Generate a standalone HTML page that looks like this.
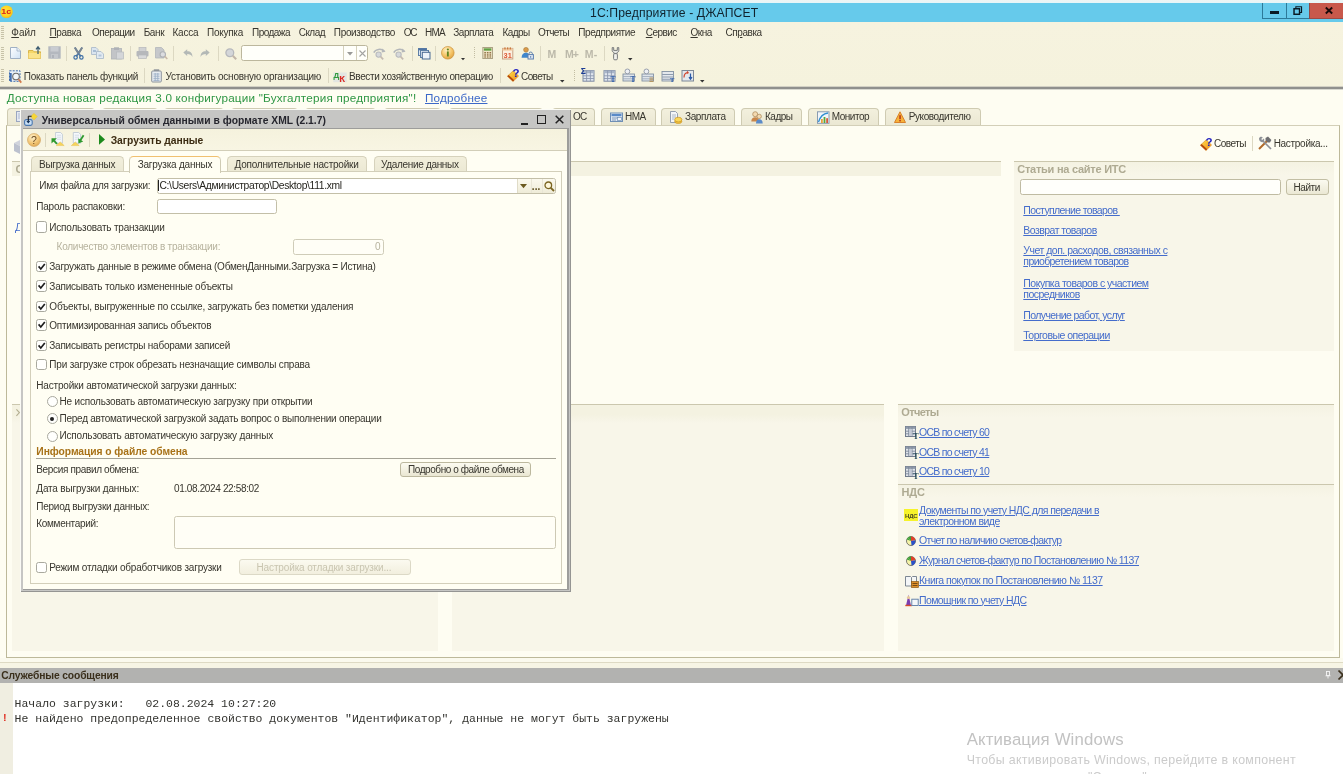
<!DOCTYPE html>
<html lang="ru"><head><meta charset="utf-8"><title>1С:Предприятие - ДЖАПСЕТ</title>
<style>
html,body{margin:0;padding:0;}
body{width:1343px;height:774px;overflow:hidden;position:relative;background:#f5f2dd;font-family:"Liberation Sans",sans-serif;}
#root{position:absolute;left:0;top:0;width:1343px;height:774px;overflow:hidden;will-change:transform;}
svg{position:absolute;overflow:visible;}
</style></head><body><div id="root">
<div style="position:absolute;left:0px;top:0px;width:1343px;height:3px;background:linear-gradient(#eff4f3,#e6f6f9)"></div><div style="position:absolute;left:0px;top:3px;width:1343px;height:19px;background:#66caeb"></div><svg style="left:0px;top:5px" width="13" height="14" viewBox="0 0 13 14"><defs><radialGradient id="g1c" cx="0.45" cy="0.4" r="0.6"><stop offset="0" stop-color="#ffe23a"/><stop offset="0.75" stop-color="#ffd21e"/><stop offset="1" stop-color="#f0b81a"/></radialGradient></defs><circle cx="6.5" cy="6.8" r="6.3" fill="url(#g1c)"/><text x="1.2" y="9.3" font-family="Liberation Sans, sans-serif" font-weight="bold" font-size="7.5" fill="#d8261c" textLength="10" lengthAdjust="spacingAndGlyphs">1с</text></svg><span style='position:absolute;white-space:pre;left:590.00px;top:4.97px;font:12.20px/16px "Liberation Sans", sans-serif;color:#10232e;letter-spacing:0.115px;'>1С:Предприятие - ДЖАПСЕТ</span><div style="position:absolute;left:1262px;top:3px;width:24px;height:16px;box-sizing:border-box;border-left:1px solid #2c7a99;border-bottom:1px solid #2c7a99;"></div><div style="position:absolute;left:1286px;top:3px;width:23px;height:16px;box-sizing:border-box;border-left:1px solid #2c7a99;border-bottom:1px solid #2c7a99;"></div><div style="position:absolute;left:1309px;top:3px;width:34px;height:16px;background:#c8584b;box-sizing:border-box;border-left:1px solid #8d4a48;border-bottom:1px solid #9d4a44;"></div><div style="position:absolute;left:1270px;top:11px;width:9px;height:2.5px;background:#0a1a24"></div><svg style="left:1293px;top:5.8px" width="9.4" height="9.2" viewBox="0 0 10 10"><path d="M3 2.5V0.8H9.2V7H7.5" fill="none" stroke="#0a1a24" stroke-width="1.2"/><rect x="1" y="3" width="6" height="6" fill="none" stroke="#0a1a24" stroke-width="1.6"/></svg><svg style="left:1325px;top:7px" width="8" height="7" viewBox="0 0 8 7"><path d="M0.8 0.5L7.2 6.5M7.2 0.5L0.8 6.5" stroke="#1a0a0a" stroke-width="1.9"/></svg><div style="position:absolute;left:0px;top:22px;width:1343px;height:65px;background:linear-gradient(#f6f3df,#f5f2dd)"></div><div style="position:absolute;left:0px;top:86px;width:1343px;height:1px;background:#d2d0c4"></div><div style="position:absolute;left:0px;top:86.8px;width:1343px;height:2px;background:#8f8f8d"></div><div style="position:absolute;left:0px;top:88.8px;width:1343px;height:0.7px;background:#d8d8d0"></div><div style="position:absolute;left:1px;top:26px;width:3px;height:13px;background:repeating-linear-gradient(#c7c2a8 0 1px,#f5f2dd 1px 2px)"></div><div style="position:absolute;left:1px;top:47px;width:3px;height:13px;background:repeating-linear-gradient(#c7c2a8 0 1px,#f5f2dd 1px 2px)"></div><div style="position:absolute;left:1px;top:69px;width:3px;height:13px;background:repeating-linear-gradient(#c7c2a8 0 1px,#f5f2dd 1px 2px)"></div><span style='position:absolute;white-space:pre;left:11.30px;top:26.04px;font:10.00px/13px "Liberation Sans", sans-serif;color:#38362e;letter-spacing:-0.023px;'><u>Ф</u>айл</span><span style='position:absolute;white-space:pre;left:49.50px;top:26.04px;font:10.00px/13px "Liberation Sans", sans-serif;color:#38362e;letter-spacing:-0.347px;'><u>П</u>равка</span><span style='position:absolute;white-space:pre;left:92.00px;top:26.04px;font:10.00px/13px "Liberation Sans", sans-serif;color:#38362e;letter-spacing:-0.510px;'>Операции</span><span style='position:absolute;white-space:pre;left:143.70px;top:26.04px;font:10.00px/13px "Liberation Sans", sans-serif;color:#38362e;letter-spacing:-0.383px;'>Банк</span><span style='position:absolute;white-space:pre;left:172.50px;top:26.04px;font:10.00px/13px "Liberation Sans", sans-serif;color:#38362e;letter-spacing:-0.231px;'>Касса</span><span style='position:absolute;white-space:pre;left:207.00px;top:26.04px;font:10.00px/13px "Liberation Sans", sans-serif;color:#38362e;letter-spacing:-0.259px;'>Покупка</span><span style='position:absolute;white-space:pre;left:252.00px;top:26.04px;font:10.00px/13px "Liberation Sans", sans-serif;color:#38362e;letter-spacing:-0.536px;'>Продажа</span><span style='position:absolute;white-space:pre;left:298.70px;top:26.04px;font:10.00px/13px "Liberation Sans", sans-serif;color:#38362e;letter-spacing:-0.531px;'>Склад</span><span style='position:absolute;white-space:pre;left:333.80px;top:26.04px;font:10.00px/13px "Liberation Sans", sans-serif;color:#38362e;letter-spacing:-0.334px;'>Производство</span><span style='position:absolute;white-space:pre;left:403.70px;top:26.04px;font:10.00px/13px "Liberation Sans", sans-serif;color:#38362e;letter-spacing:-1.200px;'>ОС</span><span style='position:absolute;white-space:pre;left:425.00px;top:26.04px;font:10.00px/13px "Liberation Sans", sans-serif;color:#38362e;letter-spacing:-0.745px;'>НМА</span><span style='position:absolute;white-space:pre;left:453.30px;top:26.04px;font:10.00px/13px "Liberation Sans", sans-serif;color:#38362e;letter-spacing:-0.475px;'>Зарплата</span><span style='position:absolute;white-space:pre;left:502.50px;top:26.04px;font:10.00px/13px "Liberation Sans", sans-serif;color:#38362e;letter-spacing:-0.557px;'>Кадры</span><span style='position:absolute;white-space:pre;left:538.00px;top:26.04px;font:10.00px/13px "Liberation Sans", sans-serif;color:#38362e;letter-spacing:-0.596px;'>Отчеты</span><span style='position:absolute;white-space:pre;left:578.30px;top:26.04px;font:10.00px/13px "Liberation Sans", sans-serif;color:#38362e;letter-spacing:-0.449px;'>Предприятие</span><span style='position:absolute;white-space:pre;left:645.80px;top:26.04px;font:10.00px/13px "Liberation Sans", sans-serif;color:#38362e;letter-spacing:-0.561px;'><u>С</u>ервис</span><span style='position:absolute;white-space:pre;left:690.50px;top:26.04px;font:10.00px/13px "Liberation Sans", sans-serif;color:#38362e;letter-spacing:-0.512px;'><u>О</u>кна</span><span style='position:absolute;white-space:pre;left:725.50px;top:26.04px;font:10.00px/13px "Liberation Sans", sans-serif;color:#38362e;letter-spacing:-0.433px;'>Сп<u>р</u>авка</span><svg style="left:9.5px;top:47px" width="11" height="12" viewBox="0 0 11 12"><defs><linearGradient id="gdoc" x1="0" y1="0" x2="1" y2="1"><stop offset="0" stop-color="#ffffff"/><stop offset="1" stop-color="#cfe2f4"/></linearGradient></defs><path d="M0.5 0.5H7L10.5 4V11.5H0.5Z" fill="url(#gdoc)" stroke="#9fb0c4" stroke-width="1"/><path d="M7 0.5V4H10.5" fill="#e8f0f8" stroke="#9fb0c4" stroke-width="0.8"/></svg><svg style="left:28px;top:46px" width="13" height="13" viewBox="0 0 13 13"><path d="M0.5 4.5H5L6 5.8H12.5V12.5H0.5Z" fill="#f6d768" stroke="#d9b44a" stroke-width="1"/><path d="M0.5 7H12.5V12.5H0.5Z" fill="#fbe38a"/><path d="M10 8V1.5M8 3.3L10 0.8L12 3.3" fill="none" stroke="#3a5a70" stroke-width="1.2"/></svg><svg style="left:47.5px;top:46px" width="13" height="13" viewBox="0 0 13 13"><rect x="0.3" y="0.3" width="12.4" height="12.4" fill="#b4b8bf"/><rect x="2.5" y="1" width="8" height="4.5" fill="#c9ccd1"/><rect x="3" y="8" width="7" height="4.7" fill="#c4c7cc"/><rect x="4" y="9" width="2" height="3" fill="#aeb2b9"/></svg><div style="position:absolute;left:66px;top:46px;width:1px;height:15px;background:#dcd8c2"></div><svg style="left:72.5px;top:46.5px" width="11" height="13" viewBox="0 0 11 13"><path d="M1.8 0.5L7.6 9.2M9.2 0.5L3.4 9.2" stroke="#5b7ea3" stroke-width="1.9" fill="none"/><path d="M1.8 0.5L5 6M9.2 0.5L6 6" stroke="#7d8791" stroke-width="1.6" fill="none"/><circle cx="2.6" cy="10.4" r="1.7" fill="none" stroke="#3c6ea5" stroke-width="1.2"/><circle cx="8.4" cy="10.4" r="1.7" fill="none" stroke="#3c6ea5" stroke-width="1.2"/></svg><svg style="left:91px;top:47px" width="13" height="12" viewBox="0 0 13 12"><path d="M0.5 0.5H5L7 2.5V7.5H0.5Z" fill="#dbe5ef" stroke="#aebccb" stroke-width="0.9"/><path d="M5.5 4.5H10L12.5 7V11.5H5.5Z" fill="#e2eaf2" stroke="#aebccb" stroke-width="0.9"/><rect x="2" y="3" width="3" height="2" fill="#a8bdd4"/><rect x="7.5" y="7.5" width="3" height="2" fill="#b4c6da"/></svg><svg style="left:111px;top:46.5px" width="13" height="12.5" viewBox="0 0 13 12.5"><rect x="0.5" y="1.5" width="10" height="10.5" fill="#c2c4c7" stroke="#b0b3b7" stroke-width="0.8"/><rect x="3" y="0.3" width="5" height="2.6" fill="#aeb1b6"/><rect x="5.5" y="5" width="7" height="7" fill="#d4d6d9" stroke="#b6b9bd" stroke-width="0.7"/></svg><div style="position:absolute;left:130px;top:46px;width:1px;height:15px;background:#dcd8c2"></div><svg style="left:136px;top:47px" width="13" height="12" viewBox="0 0 13 12"><rect x="3" y="0.5" width="7" height="4" fill="#d0d1d3" stroke="#b5b7ba" stroke-width="0.7"/><rect x="0.5" y="4" width="12" height="5.5" rx="1" fill="#b6b8bb"/><rect x="2.5" y="8" width="8" height="3.5" fill="#d8d9da" stroke="#b5b7ba" stroke-width="0.7"/></svg><svg style="left:155px;top:47px" width="13" height="12.5" viewBox="0 0 13 12.5"><path d="M0.5 0.5H6.5L9 3V11H0.5Z" fill="#c6c8cb" stroke="#b3b6ba" stroke-width="0.8"/><circle cx="7.8" cy="7.4" r="2.7" fill="#dcdde0" stroke="#aeb1b6" stroke-width="1.1"/><path d="M9.8 9.4L12.3 12" stroke="#c9b9a8" stroke-width="1.6"/></svg><div style="position:absolute;left:173px;top:46px;width:1px;height:15px;background:#dcd8c2"></div><svg style="left:182.5px;top:49px" width="10" height="8.5" viewBox="0 0 10 8.5"><path d="M0.3 3.6L4.2 0.3V2.3C7.6 2.3 9.6 4.3 9.4 8C8.3 5.8 6.8 5 4.2 5V7Z" fill="#b3b8b6"/></svg><svg style="left:200px;top:49px" width="10" height="8.5" viewBox="0 0 10 8.5"><path d="M9.7 3.6L5.8 0.3V2.3C2.4 2.3 0.4 4.3 0.6 8C1.7 5.8 3.2 5 5.8 5V7Z" fill="#b3b8b6"/></svg><div style="position:absolute;left:217.5px;top:46px;width:1px;height:15px;background:#dcd8c2"></div><svg style="left:225px;top:48px" width="12" height="12" viewBox="0 0 12 12"><circle cx="4.8" cy="4.8" r="3.9" fill="#d4d6d9" stroke="#b6b8bc" stroke-width="1.3"/><path d="M7.8 7.8L11.2 11.2" stroke="#c2b6a8" stroke-width="2"/></svg><div style="position:absolute;left:240.5px;top:45px;width:127.5px;height:15.5px;box-sizing:border-box;background:#fffffa;border:1px solid #bcb79d;border-radius:2.5px;"></div><div style="position:absolute;left:343px;top:46px;width:1px;height:13.5px;background:#d5d1bc"></div><div style="position:absolute;left:356px;top:46px;width:1px;height:13.5px;background:#d5d1bc"></div><svg style="left:346.5px;top:51.5px" width="6" height="4" viewBox="0 0 6 4"><path d="M0 0H6L3 3.4Z" fill="#9a9a98"/></svg><svg style="left:359px;top:49.5px" width="7" height="7" viewBox="0 0 7 7"><path d="M0.5 0.5L6.5 6.5M6.5 0.5L0.5 6.5" stroke="#a3a3a1" stroke-width="1.1"/></svg><svg style="left:373px;top:47.5px" width="13.5" height="12" viewBox="0 0 13.5 12"><path d="M0.8 4.6C2.5 0.8 8.5 0.4 11.3 3.2" fill="none" stroke="#b4b7ba" stroke-width="1.5"/><path d="M9.4 0.6L12.6 3.8L8.6 4.6Z" fill="#b4b7ba"/><circle cx="5.6" cy="6.6" r="2.6" fill="#d6d8da" stroke="#b9bbbe" stroke-width="1.1"/><path d="M7.6 8.6L10.2 11.4" stroke="#c5bbb0" stroke-width="1.7"/></svg><svg style="left:393px;top:47.5px" width="13.5" height="12" viewBox="0 0 13.5 12"><path d="M0.8 4.6C2.5 0.8 8.5 0.4 11.3 3.2" fill="none" stroke="#b4b7ba" stroke-width="1.5"/><path d="M9.4 0.6L12.6 3.8L8.6 4.6Z" fill="#b4b7ba"/><circle cx="5.6" cy="6.6" r="2.6" fill="#d6d8da" stroke="#b9bbbe" stroke-width="1.1"/><path d="M7.6 8.6L10.2 11.4" stroke="#c5bbb0" stroke-width="1.7"/></svg><div style="position:absolute;left:411.5px;top:46px;width:1px;height:15px;background:#dcd8c2"></div><svg style="left:418px;top:47.5px" width="12.5" height="11.5" viewBox="0 0 12.5 11.5"><rect x="0.5" y="0.5" width="8" height="7" fill="#dbe6f2" stroke="#5f7fa5" stroke-width="1"/><rect x="0.5" y="0.5" width="8" height="1.8" fill="#4f74a3"/><rect x="2.5" y="2.5" width="8" height="7" fill="#e4ecf5" stroke="#5f7fa5" stroke-width="1"/><rect x="4.3" y="4.3" width="7.7" height="6.7" fill="#eef3f9" stroke="#4a6a93" stroke-width="1"/></svg><div style="position:absolute;left:435px;top:46px;width:1px;height:15px;background:#dcd8c2"></div><svg style="left:441px;top:46.4px" width="13.6" height="13.6" viewBox="0 0 14 14"><defs><radialGradient id="ginf" cx="0.4" cy="0.3" r="0.8"><stop offset="0" stop-color="#fff0c4"/><stop offset="0.55" stop-color="#f5c467"/><stop offset="1" stop-color="#d99a38"/></radialGradient></defs><circle cx="7" cy="7" r="6.5" fill="url(#ginf)" stroke="#c98f3a" stroke-width="0.7"/><rect x="6.1" y="5.6" width="1.9" height="5.2" fill="#5f8420"/><circle cx="7.05" cy="3.6" r="1.1" fill="#5f8420"/></svg><svg style="left:460.5px;top:58px" width="4" height="2.5" viewBox="0 0 4 2.5"><path d="M0 0H4L2 2.3Z" fill="#333"/></svg><div style="position:absolute;left:474.3px;top:47px;width:1.2px;height:11px;background:repeating-linear-gradient(#c2bda3 0 1px,#f5f2dd 1px 2px)"></div><svg style="left:482.3px;top:46.8px" width="11.3" height="12" viewBox="0 0 11 12.5"><rect x="0.5" y="0.5" width="10" height="11.5" fill="#efe5c8" stroke="#a99f80" stroke-width="1"/><rect x="1.6" y="1.4" width="7.8" height="2.4" fill="#5fa043"/><g fill="#8a6a3c"><rect x="2" y="5.3" width="1.7" height="1.4"/><rect x="4.7" y="5.3" width="1.7" height="1.4"/><rect x="7.4" y="5.3" width="1.7" height="1.4"/><rect x="2" y="7.6" width="1.7" height="1.4"/><rect x="4.7" y="7.6" width="1.7" height="1.4"/><rect x="7.4" y="7.6" width="1.7" height="1.4"/><rect x="2" y="9.8" width="1.7" height="1.2"/><rect x="4.7" y="9.8" width="1.7" height="1.2"/><rect x="7.4" y="9.8" width="1.7" height="1.2"/></g></svg><svg style="left:502px;top:46.5px" width="11.5" height="13" viewBox="0 0 11.5 13"><rect x="0.5" y="1.4" width="10.3" height="10.6" fill="#fbefe0" stroke="#c9a284" stroke-width="1"/><rect x="0.5" y="1.4" width="10.3" height="2.2" fill="#f1c9a0"/><rect x="2.3" y="0.4" width="1.3" height="2" fill="#c9783c"/><rect x="5" y="0.4" width="1.3" height="2" fill="#c9783c"/><rect x="7.7" y="0.4" width="1.3" height="2" fill="#c9783c"/><text x="1.6" y="11.2" font-family="Liberation Sans, sans-serif" font-weight="bold" font-size="7.4" fill="#de5a36" textLength="8.2" lengthAdjust="spacingAndGlyphs">31</text></svg><svg style="left:521.3px;top:46.6px" width="13" height="12.5" viewBox="0 0 13 12.5"><circle cx="5" cy="2.8" r="2.4" fill="#d99a4a" stroke="#a8783a" stroke-width="0.6"/><path d="M0.6 10.8C0.6 7.4 2.4 5.8 5 5.8C6.6 5.8 7.4 6.4 8 7.4V10.8Z" fill="#3f86cc"/><rect x="7" y="7.6" width="5.4" height="4.4" fill="#e4ebf4" stroke="#5e7fae" stroke-width="1"/><path d="M8.1 7.6V6.2C8.1 4.7 11.3 4.7 11.3 6.2V7.6" fill="none" stroke="#5e7fae" stroke-width="1"/><rect x="9.2" y="9" width="1" height="1.8" fill="#5e7fae"/></svg><div style="position:absolute;left:539.7px;top:46px;width:1px;height:15px;background:#dcd8c2"></div><span style='position:absolute;white-space:pre;left:547.50px;top:46.96px;font:bold 10.50px/14px "Liberation Sans", sans-serif;color:#bcb9aa;letter-spacing:-0.250px;'>M</span><span style='position:absolute;white-space:pre;left:565.00px;top:46.96px;font:bold 10.50px/14px "Liberation Sans", sans-serif;color:#bcb9aa;letter-spacing:-0.945px;'>M+</span><span style='position:absolute;white-space:pre;left:584.70px;top:46.96px;font:bold 10.50px/14px "Liberation Sans", sans-serif;color:#bcb9aa;letter-spacing:0.275px;'>M-</span><div style="position:absolute;left:603.5px;top:46px;width:1px;height:15px;background:#dcd8c2"></div><svg style="left:611px;top:46.5px" width="9" height="13.5" viewBox="0 0 9 13.5"><path d="M1.2 0.6V3.6C1.2 4.8 2.4 5.4 3 5.6V6.8H6V5.6C6.6 5.4 7.8 4.8 7.8 3.6V0.6H6.3V3.4H2.7V0.6Z" fill="#e6e7e4" stroke="#6c6e70" stroke-width="0.9"/><rect x="2.6" y="6.6" width="3.8" height="6.2" rx="1.2" fill="#f1f1ec" stroke="#6c6e70" stroke-width="0.9"/></svg><svg style="left:628px;top:58px" width="4.5" height="2.5" viewBox="0 0 4.5 2.5"><path d="M0 0H4.5L2.25 2.4Z" fill="#333"/></svg><svg style="left:9px;top:69.5px" width="13" height="13.5" viewBox="0 0 13 13.5"><rect x="0.5" y="0.8" width="10.5" height="10.5" fill="#e9f0f8" stroke="#3f6cb0" stroke-width="1" stroke-dasharray="2 1.2"/><rect x="0.5" y="3" width="2.2" height="8" fill="#3f6cb0"/><circle cx="7" cy="6.6" r="3.3" fill="#f4f7fa" stroke="#6d6d6d" stroke-width="1.1"/><path d="M9.4 9.2L12.3 12.6" stroke="#d67a4a" stroke-width="1.7"/></svg><span style='position:absolute;white-space:pre;left:23.80px;top:69.63px;font:10.00px/13px "Liberation Sans", sans-serif;color:#38362e;letter-spacing:-0.285px;'>Показать панель функций</span><div style="position:absolute;left:144px;top:68px;width:1px;height:15px;background:#dcd8c2"></div><svg style="left:151px;top:68.5px" width="11" height="13.5" viewBox="0 0 11 13.5"><rect x="2.8" y="0.3" width="5.4" height="2.4" fill="#8f959c"/><rect x="0.7" y="2" width="9.6" height="11" rx="1" fill="#e6ebf0" stroke="#8c939b" stroke-width="1"/><g stroke="#9db0c6" stroke-width="0.9"><path d="M2.5 5H8.5M2.5 7.2H8.5M2.5 9.4H8.5M2.5 11.4H8.5M4.2 4V12M6.8 4V12"/></g></svg><span style='position:absolute;white-space:pre;left:165.50px;top:69.63px;font:10.00px/13px "Liberation Sans", sans-serif;color:#38362e;letter-spacing:-0.248px;'>Установить основную организацию</span><div style="position:absolute;left:327.5px;top:68px;width:1px;height:15px;background:#dcd8c2"></div><svg style="left:333px;top:69px" width="14" height="13.5" viewBox="0 0 14 13.5"><rect x="0.3" y="3.5" width="13.4" height="9.7" fill="#e3e6e2"/><text x="0.6" y="8.6" font-family="Liberation Sans, sans-serif" font-weight="bold" font-size="8" fill="#2f9a3a">Д</text><text x="6.3" y="12.8" font-family="Liberation Sans, sans-serif" font-weight="bold" font-size="9.5" fill="#dc2a22">К</text></svg><span style='position:absolute;white-space:pre;left:349.00px;top:69.63px;font:10.00px/13px "Liberation Sans", sans-serif;color:#38362e;letter-spacing:-0.360px;'>Ввести хозяйственную операцию</span><div style="position:absolute;left:500px;top:68px;width:1px;height:15px;background:#dcd8c2"></div><svg style="left:506.5px;top:68px" width="12.5" height="14" viewBox="0 0 12.5 14"><defs><linearGradient id="gsv" x1="0" y1="0" x2="1" y2="1"><stop offset="0" stop-color="#ffe14a"/><stop offset="1" stop-color="#f08a1c"/></linearGradient></defs><path d="M0.4 8.2L6.2 2.8L11.6 8L6 13.4Z" fill="url(#gsv)" stroke="#d98a1c" stroke-width="0.6"/><path d="M0.4 8.2L6 13.4L7.2 12.3L1.6 7Z" fill="#b3470c"/><text x="5.6" y="8.6" font-family="Liberation Sans, sans-serif" font-weight="bold" font-size="11.5" fill="#1f1fc0">?</text></svg><span style='position:absolute;white-space:pre;left:521.00px;top:69.63px;font:10.00px/13px "Liberation Sans", sans-serif;color:#38362e;letter-spacing:-0.581px;'>Советы</span><svg style="left:560px;top:80px" width="4.5" height="2.5" viewBox="0 0 4.5 2.5"><path d="M0 0H4.5L2.25 2.4Z" fill="#333"/></svg><div style="position:absolute;left:574.2px;top:69.5px;width:1.2px;height:11px;background:repeating-linear-gradient(#c2bda3 0 1px,#f5f2dd 1px 2px)"></div><svg style="left:580.5px;top:68px" width="14" height="15" viewBox="0 0 14 15"><rect x="2" y="2.6" width="11" height="10.6" fill="#dfe5ee" stroke="#7f8ba3" stroke-width="1"/><rect x="2" y="2.6" width="11" height="2.6" fill="#a9b5c8"/><path d="M5.6 2.6V13.2M9.4 2.6V13.2M2 7.8H13M2 10.5H13" stroke="#8d99b0" stroke-width="0.9"/><text x="-0.3" y="6.3" font-family="Liberation Sans, sans-serif" font-weight="bold" font-size="8.5" fill="#1c3c94">Σ</text></svg><svg style="left:601.5px;top:68px" width="14" height="15" viewBox="0 0 14 15"><rect x="2" y="2.6" width="11" height="10.6" fill="#dfe5ee" stroke="#7f8ba3" stroke-width="1"/><rect x="2" y="2.6" width="11" height="2.6" fill="#a9b5c8"/><path d="M5.6 2.6V13.2M9.4 2.6V13.2M2 7.8H13M2 10.5H13" stroke="#8d99b0" stroke-width="0.9"/><text x="8.6" y="14" font-family="Liberation Serif, serif" font-weight="bold" font-size="7.5" fill="#2a5aa8">T</text></svg><svg style="left:621.5px;top:68px" width="14" height="15" viewBox="0 0 14 15"><rect x="1" y="6" width="11.5" height="7" fill="#dfe4ea" stroke="#8391a3" stroke-width="0.9"/><path d="M1 8.5H12.5M1 10.8H12.5" stroke="#9aa7b8" stroke-width="0.8"/><circle cx="5.4" cy="3.4" r="2.4" fill="#eef0f4" stroke="#8f96a6" stroke-width="0.9"/><text x="8.6" y="14" font-family="Liberation Serif, serif" font-weight="bold" font-size="7.5" fill="#2a5aa8">T</text></svg><svg style="left:641px;top:68px" width="14" height="15" viewBox="0 0 14 15"><rect x="1" y="6" width="11.5" height="7" fill="#dfe4ea" stroke="#8391a3" stroke-width="0.9"/><path d="M1 8.5H12.5M1 10.8H12.5" stroke="#9aa7b8" stroke-width="0.8"/><circle cx="5.4" cy="3.4" r="2.4" fill="#eef0f4" stroke="#8f96a6" stroke-width="0.9"/><path d="M8.5 10H12.5M8.5 11.8H12.5M8.5 13.4H12.5" stroke="#b08a4a" stroke-width="0.9"/></svg><svg style="left:661px;top:68px" width="14" height="15" viewBox="0 0 14 15"><rect x="1" y="3.5" width="11.5" height="9.5" fill="#e4e8ed" stroke="#8391a3" stroke-width="0.9"/><path d="M1 6.5H12.5M1 9H12.5M1 11.2H12.5" stroke="#8f9cae" stroke-width="1.1"/><text x="9" y="14.2" font-family="Liberation Serif, serif" font-weight="bold" font-size="6.5" fill="#2a5aa8">T</text></svg><svg style="left:681px;top:68px" width="14" height="15" viewBox="0 0 14 15"><rect x="1" y="2.5" width="11.5" height="10.5" fill="#e4e8ed" stroke="#7d8898" stroke-width="1"/><path d="M3 9.5C3 6 5 4.6 7 4.6L6.2 3.4M7 4.6L5.8 5.6" fill="none" stroke="#d0442c" stroke-width="1.2"/><path d="M9.5 5.5V11M8 9.2L9.5 11.2L11 9.2" fill="none" stroke="#2a5aa8" stroke-width="1.2"/></svg><svg style="left:699.5px;top:80px" width="4.5" height="2.5" viewBox="0 0 4.5 2.5"><path d="M0 0H4.5L2.25 2.4Z" fill="#333"/></svg><div style="position:absolute;left:0px;top:90px;width:1343px;height:578px;background:#fefdf2"></div><span style='position:absolute;white-space:pre;left:6.70px;top:90.35px;font:11.70px/15px "Liberation Sans", sans-serif;color:#2e9644;letter-spacing:0.217px;'>Доступна новая редакция 3.0 конфигурации "Бухгалтерия предприятия"!</span><span style='position:absolute;white-space:pre;left:425.00px;top:90.35px;font:11.70px/15px "Liberation Sans", sans-serif;color:#3c68c8;letter-spacing:0.208px;text-decoration:underline;'>Подробнее</span><div style="position:absolute;left:6px;top:125px;width:1333.5px;height:533px;box-sizing:border-box;background:#fefdf2;border:1px solid #bdb99a;border-top-color:#d3cfb8;"></div><div style="position:absolute;left:6.5px;top:107.5px;width:88.5px;height:17.5px;box-sizing:border-box;background:linear-gradient(#f3f0dd,#ebe8d3);border:1px solid #cfcbb2;border-bottom:none;border-radius:4px 4px 0 0;"></div><svg style="left:15.5px;top:111px" width="8" height="11" viewBox="0 0 8 11"><rect x="0.5" y="0.5" width="7" height="10" fill="#e3e8f2" stroke="#9aa6c0" stroke-width="1"/><path d="M2 3H6M2 5H6M2 7H6" stroke="#a9b4cc" stroke-width="0.9"/></svg><span style='position:absolute;white-space:pre;left:28.00px;top:110.03px;font:10.00px/13px "Liberation Sans", sans-serif;color:#38362e;letter-spacing:-0.892px;'>Начало работы</span><div style="position:absolute;left:102px;top:107.5px;width:56px;height:17.5px;box-sizing:border-box;background:linear-gradient(#f3f0dd,#ebe8d3);border:1px solid #cfcbb2;border-bottom:none;border-radius:4px 4px 0 0;"></div><span style='position:absolute;white-space:pre;left:124.00px;top:110.03px;font:10.00px/13px "Liberation Sans", sans-serif;color:#38362e;letter-spacing:0.492px;'>Банк</span><div style="position:absolute;left:164px;top:107.5px;width:60px;height:17.5px;box-sizing:border-box;background:linear-gradient(#f3f0dd,#ebe8d3);border:1px solid #cfcbb2;border-bottom:none;border-radius:4px 4px 0 0;"></div><span style='position:absolute;white-space:pre;left:186.00px;top:110.03px;font:10.00px/13px "Liberation Sans", sans-serif;color:#38362e;letter-spacing:0.209px;'>Касса</span><div style="position:absolute;left:231px;top:107.5px;width:67px;height:18px;box-sizing:border-box;background:#fefdf2;border:1px solid #cfcbb2;border-bottom:none;border-radius:4px 4px 0 0;"></div><span style='position:absolute;white-space:pre;left:252.00px;top:110.03px;font:10.00px/13px "Liberation Sans", sans-serif;color:#38362e;letter-spacing:0.027px;'>Покупка</span><div style="position:absolute;left:305px;top:107.5px;width:71px;height:17.5px;box-sizing:border-box;background:linear-gradient(#f3f0dd,#ebe8d3);border:1px solid #cfcbb2;border-bottom:none;border-radius:4px 4px 0 0;"></div><span style='position:absolute;white-space:pre;left:326.00px;top:110.03px;font:10.00px/13px "Liberation Sans", sans-serif;color:#38362e;letter-spacing:0.036px;'>Продажа</span><div style="position:absolute;left:384px;top:107.5px;width:57px;height:17.5px;box-sizing:border-box;background:linear-gradient(#f3f0dd,#ebe8d3);border:1px solid #cfcbb2;border-bottom:none;border-radius:4px 4px 0 0;"></div><span style='position:absolute;white-space:pre;left:404.00px;top:110.03px;font:10.00px/13px "Liberation Sans", sans-serif;color:#38362e;letter-spacing:-0.191px;'>Склад</span><div style="position:absolute;left:449px;top:107.5px;width:93.60000000000002px;height:17.5px;box-sizing:border-box;background:linear-gradient(#f3f0dd,#ebe8d3);border:1px solid #cfcbb2;border-bottom:none;border-radius:4px 4px 0 0;"></div><span style='position:absolute;white-space:pre;left:470.00px;top:110.03px;font:10.00px/13px "Liberation Sans", sans-serif;color:#38362e;letter-spacing:-0.100px;'>Производство</span><div style="position:absolute;left:551.5px;top:107.5px;width:43.5px;height:17.5px;box-sizing:border-box;background:linear-gradient(#f3f0dd,#ebe8d3);border:1px solid #cfcbb2;border-bottom:none;border-radius:4px 4px 0 0;"></div><span style='position:absolute;white-space:pre;left:573.00px;top:110.03px;font:10.00px/13px "Liberation Sans", sans-serif;color:#38362e;letter-spacing:-0.850px;'>ОС</span><div style="position:absolute;left:601px;top:107.5px;width:54.5px;height:17.5px;box-sizing:border-box;background:linear-gradient(#f3f0dd,#ebe8d3);border:1px solid #cfcbb2;border-bottom:none;border-radius:4px 4px 0 0;"></div><svg style="left:610px;top:111.5px" width="13" height="11" viewBox="0 0 13 11"><rect x="0.5" y="1" width="12" height="8.5" fill="#dfe8f2" stroke="#6f8fb5" stroke-width="1"/><rect x="1.5" y="2" width="10" height="2.2" fill="#5a8ac8"/><path d="M2 6H7M2 8H6" stroke="#7a93b3" stroke-width="0.9"/><rect x="7.5" y="5.5" width="4" height="3" fill="#f2f5f9" stroke="#6f8fb5" stroke-width="0.7"/></svg><span style='position:absolute;white-space:pre;left:625.00px;top:110.03px;font:10.00px/13px "Liberation Sans", sans-serif;color:#38362e;letter-spacing:-0.545px;'>НМА</span><div style="position:absolute;left:661.4px;top:107.5px;width:74.10000000000002px;height:17.5px;box-sizing:border-box;background:linear-gradient(#f3f0dd,#ebe8d3);border:1px solid #cfcbb2;border-bottom:none;border-radius:4px 4px 0 0;"></div><svg style="left:670px;top:110.5px" width="12.5" height="13" viewBox="0 0 12.5 13"><path d="M0.5 0.5H5.5L7.5 2.5V11.5H0.5Z" fill="#f3f5f8" stroke="#8a96a8" stroke-width="0.9"/><path d="M2 4H6M2 6H6M2 8H4.5" stroke="#9aa8ba" stroke-width="0.8"/><ellipse cx="8.3" cy="10.2" rx="3.6" ry="2.3" fill="#f4c43c" stroke="#c9952a" stroke-width="0.7"/><ellipse cx="8.3" cy="8.6" rx="3.6" ry="2.3" fill="#fbd85a" stroke="#c9952a" stroke-width="0.7"/></svg><span style='position:absolute;white-space:pre;left:685.00px;top:110.03px;font:10.00px/13px "Liberation Sans", sans-serif;color:#38362e;letter-spacing:-0.400px;'>Зарплата</span><div style="position:absolute;left:741.4px;top:107.5px;width:61.0px;height:17.5px;box-sizing:border-box;background:linear-gradient(#f3f0dd,#ebe8d3);border:1px solid #cfcbb2;border-bottom:none;border-radius:4px 4px 0 0;"></div><svg style="left:750.5px;top:110.5px" width="12" height="13" viewBox="0 0 12 13"><circle cx="4.2" cy="3.2" r="2.5" fill="#f3d9b0" stroke="#a88455" stroke-width="0.7"/><path d="M0.3 10.5C0.3 7.3 2 6.2 4.2 6.2C6.4 6.2 8 7.3 8 10.5Z" fill="#c9864a"/><circle cx="8.2" cy="5.4" r="2.2" fill="#f3d9b0" stroke="#a88455" stroke-width="0.7"/><path d="M5 12.5C5 9.6 6.4 8.3 8.3 8.3C10.2 8.3 11.7 9.6 11.7 12.5Z" fill="#5a8ac8"/></svg><span style='position:absolute;white-space:pre;left:765.00px;top:110.03px;font:10.00px/13px "Liberation Sans", sans-serif;color:#38362e;letter-spacing:-0.497px;'>Кадры</span><div style="position:absolute;left:808.3px;top:107.5px;width:71.0px;height:17.5px;box-sizing:border-box;background:linear-gradient(#f3f0dd,#ebe8d3);border:1px solid #cfcbb2;border-bottom:none;border-radius:4px 4px 0 0;"></div><svg style="left:817px;top:110.5px" width="12.5" height="13" viewBox="0 0 12.5 13"><rect x="0.5" y="0.8" width="11.5" height="11.5" fill="#f1f5fa" stroke="#7f93ac" stroke-width="0.9"/><path d="M1.5 11C3 6 6.5 2.6 11 2" fill="none" stroke="#2f8fd0" stroke-width="1.3"/><rect x="4" y="8" width="1.8" height="4" fill="#e9a23a"/><rect x="6.6" y="6" width="1.8" height="6" fill="#5aa83a"/><rect x="9.2" y="7.2" width="1.8" height="4.8" fill="#d85a3a"/></svg><span style='position:absolute;white-space:pre;left:831.80px;top:110.03px;font:10.00px/13px "Liberation Sans", sans-serif;color:#38362e;letter-spacing:-0.500px;'>Монитор</span><div style="position:absolute;left:884.7px;top:107.5px;width:96.29999999999995px;height:17.5px;box-sizing:border-box;background:linear-gradient(#f3f0dd,#ebe8d3);border:1px solid #cfcbb2;border-bottom:none;border-radius:4px 4px 0 0;"></div><svg style="left:893.5px;top:110.5px" width="12" height="12.5" viewBox="0 0 12 12.5"><path d="M6 0.8L11.5 11.5H0.5Z" fill="#f7b23a" stroke="#d9822a" stroke-width="1" stroke-linejoin="round"/><rect x="5.3" y="4.2" width="1.5" height="4" fill="#b2321a"/><rect x="5.3" y="9" width="1.5" height="1.4" fill="#b2321a"/></svg><span style='position:absolute;white-space:pre;left:908.70px;top:110.03px;font:10.00px/13px "Liberation Sans", sans-serif;color:#38362e;letter-spacing:-0.402px;'>Руководителю</span><svg style="left:1199.5px;top:136.5px" width="12.5" height="14" viewBox="0 0 12.5 14"><defs><linearGradient id="gsv" x1="0" y1="0" x2="1" y2="1"><stop offset="0" stop-color="#ffe14a"/><stop offset="1" stop-color="#f08a1c"/></linearGradient></defs><path d="M0.4 8.2L6.2 2.8L11.6 8L6 13.4Z" fill="url(#gsv)" stroke="#d98a1c" stroke-width="0.6"/><path d="M0.4 8.2L6 13.4L7.2 12.3L1.6 7Z" fill="#b3470c"/><text x="5.6" y="8.6" font-family="Liberation Sans, sans-serif" font-weight="bold" font-size="11.5" fill="#1f1fc0">?</text></svg><span style='position:absolute;white-space:pre;left:1214.00px;top:137.34px;font:10.00px/13px "Liberation Sans", sans-serif;color:#38362e;letter-spacing:-0.497px;'>Советы</span><div style="position:absolute;left:1252px;top:136px;width:1px;height:15px;background:#dcd8c2"></div><svg style="left:1257.5px;top:136px" width="14" height="14" viewBox="0 0 14 14"><path d="M1 13L9.5 4.5" stroke="#b06a2a" stroke-width="2"/><path d="M7.5 2L10 0.6L13.4 4L12 6.5L9.6 6.4L7.6 4.4Z" fill="#6f6f72"/><path d="M13 13L5 5" stroke="#8d9096" stroke-width="1.7"/><path d="M1 2.6C1.4 0.8 3.6 0.4 4.8 1.4L3.2 3L4.2 4L5.8 2.4C6.8 3.6 6.2 5.8 4.4 6.2C2.4 6.4 0.8 4.6 1 2.6Z" fill="#8d9096"/></svg><span style='position:absolute;white-space:pre;left:1273.70px;top:137.34px;font:10.00px/13px "Liberation Sans", sans-serif;color:#38362e;letter-spacing:-0.298px;'>Настройка...</span><svg style="left:14.3px;top:139px" width="14" height="15" viewBox="0 0 14 15"><path d="M0 4L8 0L16 4L8 8Z" fill="#d0d3dc"/><path d="M0 4V12L8 16V8Z" fill="#bcc1ce"/><path d="M16 4V12L8 16V8Z" fill="#dadde4"/></svg><div style="position:absolute;left:12.4px;top:161px;width:425.6px;height:237px;background:#fefdf2"></div><div style="position:absolute;left:12.4px;top:161px;width:425.6px;height:14.5px;background:linear-gradient(#f4f2e1,#f4f2e1 55%,#f4f2e1)"></div><div style="position:absolute;left:12.4px;top:161px;width:425.6px;height:1.2px;background:#cbc7ae"></div><span style='position:absolute;white-space:pre;left:15.60px;top:161.59px;font:bold 11.00px/14px "Liberation Sans", sans-serif;color:#aeaa92;letter-spacing:-1.200px;'>Схема работы</span><span style='position:absolute;white-space:pre;left:14.90px;top:219.96px;font:10.50px/14px "Liberation Sans", sans-serif;color:#446ccb;letter-spacing:-0.736px;text-decoration:underline;'>Документы поставщиков</span><div style="position:absolute;left:452.3px;top:161px;width:548.7px;height:237px;background:#fefdf2"></div><div style="position:absolute;left:452.3px;top:161px;width:548.7px;height:14.5px;background:linear-gradient(#f4f2e1,#f4f2e1 55%,#f4f2e1)"></div><div style="position:absolute;left:452.3px;top:161px;width:548.7px;height:1.2px;background:#cbc7ae"></div><div style="position:absolute;left:1014px;top:161px;width:320px;height:189.5px;background:#f8f6e9"></div><div style="position:absolute;left:1014px;top:161px;width:320px;height:13.5px;background:linear-gradient(#f4f2e2,#f4f2e2 0%,#f8f6e9)"></div><div style="position:absolute;left:1014px;top:161px;width:320px;height:1.2px;background:#cbc7ae"></div><span style='position:absolute;white-space:pre;left:1017.20px;top:161.59px;font:bold 11.00px/14px "Liberation Sans", sans-serif;color:#aeaa92;letter-spacing:-0.247px;'>Статьи на сайте ИТС</span><div style="position:absolute;left:1019.5px;top:178.9px;width:261.5px;height:16px;box-sizing:border-box;background:#fffffb;border:1px solid #bfbba2;border-radius:2.5px;"></div><div style="position:absolute;left:1285.5px;top:178.9px;width:43px;height:16px;box-sizing:border-box;background:linear-gradient(#fbfaf0,#ebe8d4);border:1px solid #c2bea4;border-radius:3px;"></div><span style='position:absolute;white-space:pre;left:1293.50px;top:181.34px;font:10.00px/13px "Liberation Sans", sans-serif;color:#38362e;letter-spacing:-0.449px;'>Найти</span><span style='position:absolute;white-space:pre;left:1023.30px;top:202.56px;font:10.50px/14px "Liberation Sans", sans-serif;color:#446ccb;letter-spacing:-0.620px;text-decoration:underline;'>Поступление товаров </span><span style='position:absolute;white-space:pre;left:1023.30px;top:222.56px;font:10.50px/14px "Liberation Sans", sans-serif;color:#446ccb;letter-spacing:-0.533px;text-decoration:underline;'>Возврат товаров</span><span style='position:absolute;white-space:pre;left:1023.30px;top:243.16px;font:10.50px/14px "Liberation Sans", sans-serif;color:#446ccb;letter-spacing:-0.497px;text-decoration:underline;'>Учет доп. расходов, связанных с</span><span style='position:absolute;white-space:pre;left:1023.30px;top:254.36px;font:10.50px/14px "Liberation Sans", sans-serif;color:#446ccb;letter-spacing:-0.597px;text-decoration:underline;'>приобретением товаров</span><span style='position:absolute;white-space:pre;left:1023.30px;top:275.96px;font:10.50px/14px "Liberation Sans", sans-serif;color:#446ccb;letter-spacing:-0.502px;text-decoration:underline;'>Покупка товаров с участием</span><span style='position:absolute;white-space:pre;left:1023.30px;top:287.26px;font:10.50px/14px "Liberation Sans", sans-serif;color:#446ccb;letter-spacing:-0.523px;text-decoration:underline;'>посредников</span><span style='position:absolute;white-space:pre;left:1023.30px;top:307.76px;font:10.50px/14px "Liberation Sans", sans-serif;color:#446ccb;letter-spacing:-0.597px;text-decoration:underline;'>Получение работ, услуг</span><span style='position:absolute;white-space:pre;left:1023.30px;top:327.86px;font:10.50px/14px "Liberation Sans", sans-serif;color:#446ccb;letter-spacing:-0.523px;text-decoration:underline;'>Торговые операции</span><div style="position:absolute;left:12.4px;top:404px;width:425.6px;height:247px;background:#f8f6e9"></div><div style="position:absolute;left:12.4px;top:404px;width:425.6px;height:18.5px;background:linear-gradient(#f4f2e1,#f4f2e1 55%,#f8f6e9)"></div><div style="position:absolute;left:12.4px;top:404px;width:425.6px;height:1.2px;background:#cbc7ae"></div><svg style="left:16.3px;top:408.7px" width="4" height="7.2" viewBox="0 0 4 7.2"><path d="M0.4 0.3L3.4 3.6L0.4 6.9" fill="none" stroke="#b3ae90" stroke-width="1.1"/></svg><div style="position:absolute;left:452.3px;top:404px;width:431.7px;height:247px;background:#f8f6e9"></div><div style="position:absolute;left:452.3px;top:404px;width:431.7px;height:18.5px;background:linear-gradient(#f4f2e1,#f4f2e1 55%,#f8f6e9)"></div><div style="position:absolute;left:452.3px;top:404px;width:431.7px;height:1.2px;background:#cbc7ae"></div><div style="position:absolute;left:898px;top:404px;width:436px;height:247px;background:#f8f6e9"></div><div style="position:absolute;left:898px;top:404px;width:436px;height:13.5px;background:linear-gradient(#f4f2e2,#f4f2e2 0%,#f8f6e9)"></div><div style="position:absolute;left:898px;top:404px;width:436px;height:1.2px;background:#cbc7ae"></div><span style='position:absolute;white-space:pre;left:901.20px;top:404.59px;font:bold 11.00px/14px "Liberation Sans", sans-serif;color:#aeaa92;letter-spacing:-0.616px;'>Отчеты</span><svg style="left:905px;top:426.1px" width="13.5" height="12.5" viewBox="0 0 13.5 12.5"><rect x="0.5" y="0.5" width="10" height="10" fill="#dfe3ea" stroke="#707a8a" stroke-width="1"/><rect x="0.5" y="0.5" width="10" height="2.4" fill="#8f99aa"/><path d="M3.7 0.5V10.5M7 0.5V10.5M0.5 5.2H10.5M0.5 7.8H10.5" stroke="#7f8a9c" stroke-width="0.9"/><rect x="4" y="3" width="2.8" height="7" fill="#c4cad6"/><text x="8.2" y="13" font-family="Liberation Serif, serif" font-weight="bold" font-size="8" fill="#1f4656">T</text></svg><span style='position:absolute;white-space:pre;left:919.00px;top:424.96px;font:10.50px/14px "Liberation Sans", sans-serif;color:#446ccb;letter-spacing:-0.719px;text-decoration:underline;'>ОСВ по счету 60</span><svg style="left:905px;top:445.8px" width="13.5" height="12.5" viewBox="0 0 13.5 12.5"><rect x="0.5" y="0.5" width="10" height="10" fill="#dfe3ea" stroke="#707a8a" stroke-width="1"/><rect x="0.5" y="0.5" width="10" height="2.4" fill="#8f99aa"/><path d="M3.7 0.5V10.5M7 0.5V10.5M0.5 5.2H10.5M0.5 7.8H10.5" stroke="#7f8a9c" stroke-width="0.9"/><rect x="4" y="3" width="2.8" height="7" fill="#c4cad6"/><text x="8.2" y="13" font-family="Liberation Serif, serif" font-weight="bold" font-size="8" fill="#1f4656">T</text></svg><span style='position:absolute;white-space:pre;left:919.00px;top:444.66px;font:10.50px/14px "Liberation Sans", sans-serif;color:#446ccb;letter-spacing:-0.719px;text-decoration:underline;'>ОСВ по счету 41</span><svg style="left:905px;top:465.5px" width="13.5" height="12.5" viewBox="0 0 13.5 12.5"><rect x="0.5" y="0.5" width="10" height="10" fill="#dfe3ea" stroke="#707a8a" stroke-width="1"/><rect x="0.5" y="0.5" width="10" height="2.4" fill="#8f99aa"/><path d="M3.7 0.5V10.5M7 0.5V10.5M0.5 5.2H10.5M0.5 7.8H10.5" stroke="#7f8a9c" stroke-width="0.9"/><rect x="4" y="3" width="2.8" height="7" fill="#c4cad6"/><text x="8.2" y="13" font-family="Liberation Serif, serif" font-weight="bold" font-size="8" fill="#1f4656">T</text></svg><span style='position:absolute;white-space:pre;left:919.00px;top:464.36px;font:10.50px/14px "Liberation Sans", sans-serif;color:#446ccb;letter-spacing:-0.719px;text-decoration:underline;'>ОСВ по счету 10</span><div style="position:absolute;left:898px;top:484px;width:436px;height:13px;background:linear-gradient(#f4f2e2,#f8f6e9)"></div><div style="position:absolute;left:898px;top:484px;width:436px;height:1.2px;background:#cbc7ae"></div><span style='position:absolute;white-space:pre;left:901.40px;top:484.99px;font:bold 11.00px/14px "Liberation Sans", sans-serif;color:#aeaa92;letter-spacing:-0.145px;'>НДС</span><div style="position:absolute;left:904.4px;top:508.8px;width:13.5px;height:12px;background:#f6f32a"></div><span style='position:absolute;white-space:pre;left:905.00px;top:511.52px;font:bold 6.00px/8px "Liberation Sans", sans-serif;color:#4a4a20;letter-spacing:-0.151px;'>НДС</span><span style='position:absolute;white-space:pre;left:919.00px;top:502.76px;font:10.50px/14px "Liberation Sans", sans-serif;color:#446ccb;letter-spacing:-0.578px;text-decoration:underline;'>Документы по учету НДС для передачи в</span><span style='position:absolute;white-space:pre;left:919.00px;top:513.86px;font:10.50px/14px "Liberation Sans", sans-serif;color:#446ccb;letter-spacing:-0.536px;text-decoration:underline;'>электронном виде</span><svg style="left:906px;top:536px" width="10" height="10" viewBox="0 0 10 10"><circle cx="5" cy="5" r="4.5" fill="#f6f2a8" stroke="#5a5a5a" stroke-width="0.8"/><path d="M5 5L1.8 1.8A4.5 4.5 0 0 1 5 0.5Z" fill="#3fa03a"/><path d="M5 5V0.5A4.5 4.5 0 0 1 9.4 4.2Z" fill="#e0402a"/><path d="M5 5L9.4 4.2A4.5 4.5 0 0 1 5.6 9.45Z" fill="#2a50c8"/><path d="M5 5L1.8 1.8A4.5 4.5 0 0 0 0.8 3.4Z" fill="#3fa03a"/></svg><span style='position:absolute;white-space:pre;left:919.00px;top:533.36px;font:10.50px/14px "Liberation Sans", sans-serif;color:#446ccb;letter-spacing:-0.675px;text-decoration:underline;'>Отчет по наличию счетов-фактур</span><svg style="left:906px;top:556px" width="10" height="10" viewBox="0 0 10 10"><circle cx="5" cy="5" r="4.5" fill="#f6f2a8" stroke="#5a5a5a" stroke-width="0.8"/><path d="M5 5L1.8 1.8A4.5 4.5 0 0 1 5 0.5Z" fill="#3fa03a"/><path d="M5 5V0.5A4.5 4.5 0 0 1 9.4 4.2Z" fill="#e0402a"/><path d="M5 5L9.4 4.2A4.5 4.5 0 0 1 5.6 9.45Z" fill="#2a50c8"/><path d="M5 5L1.8 1.8A4.5 4.5 0 0 0 0.8 3.4Z" fill="#3fa03a"/></svg><span style='position:absolute;white-space:pre;left:919.00px;top:553.36px;font:10.50px/14px "Liberation Sans", sans-serif;color:#446ccb;letter-spacing:-0.607px;text-decoration:underline;'>Журнал счетов-фактур по Постановлению № 1137</span><svg style="left:904.5px;top:574.5px" width="14" height="13" viewBox="0 0 14 13"><path d="M0.5 1.5H5.5L6.5 2.5V11H0.5Z" fill="#f4f6f8" stroke="#6f7a88" stroke-width="0.9"/><path d="M6.5 2.5L7.5 1.5H11.5V7" fill="#f4f6f8" stroke="#6f7a88" stroke-width="0.9"/><rect x="6.5" y="6.5" width="7" height="6" fill="#e0902a" stroke="#8a5a1a" stroke-width="0.7"/><path d="M7.5 8.5H12.5M7.5 10.5H12.5" stroke="#5a3a10" stroke-width="0.8"/></svg><span style='position:absolute;white-space:pre;left:919.00px;top:572.86px;font:10.50px/14px "Liberation Sans", sans-serif;color:#446ccb;letter-spacing:-0.509px;text-decoration:underline;'>Книга покупок по Постановлению № 1137</span><svg style="left:904.5px;top:594px" width="14" height="12.5" viewBox="0 0 14 12.5"><path d="M1 11.5L3.5 0.8L6 11.5Z" fill="#7a3fb0"/><circle cx="3.5" cy="3.5" r="1.6" fill="#e8c89a"/><path d="M0.3 11.5H6.8" stroke="#d84a2a" stroke-width="1.4"/><rect x="6.8" y="5.2" width="6.4" height="6.3" fill="#f4f7fa" stroke="#5a7aa5" stroke-width="0.9"/></svg><span style='position:absolute;white-space:pre;left:919.00px;top:592.76px;font:10.50px/14px "Liberation Sans", sans-serif;color:#446ccb;letter-spacing:-0.609px;text-decoration:underline;'>Помощник по учету НДС</span><div style="position:absolute;left:20.3px;top:109px;width:550.7px;height:483px;background:#c6c6c4"></div><div style="position:absolute;left:20.3px;top:109px;width:550.7px;height:1px;background:#fbfbf6"></div><div style="position:absolute;left:20.3px;top:109px;width:1px;height:483px;background:#fbfbf6"></div><div style="position:absolute;left:22.5px;top:128.2px;width:546px;height:462px;background:#9d9d9b"></div><div style="position:absolute;left:570px;top:110px;width:1px;height:482px;background:#959593"></div><div style="position:absolute;left:21.3px;top:591px;width:549.7px;height:1px;background:#959593"></div><div style="position:absolute;left:23.3px;top:129px;width:544.2px;height:460.2px;background:#fffef3"></div><svg style="left:24px;top:113px" width="13.5" height="13" viewBox="0 0 13.5 13"><path d="M10 0.3L13.3 3.6L10 7L6.7 3.6Z" fill="#f6d636" stroke="#e8c020" stroke-width="0.4"/><rect x="0.6" y="6.6" width="7.6" height="5.8" rx="1.6" fill="#c9dff4" stroke="#4a78b0" stroke-width="1.1"/><path d="M4.3 3.2H7.6M4.3 3.2V9" fill="none" stroke="#1a1a1a" stroke-width="1.1"/><path d="M2.4 8H6.2L4.3 10.6Z" fill="#12305a"/></svg><span style='position:absolute;white-space:pre;left:41.70px;top:113.53px;font:bold 10.30px/13px "Liberation Sans", sans-serif;color:#26262e;letter-spacing:0.043px;'>Универсальный обмен данными в формате XML (2.1.7)</span><div style="position:absolute;left:521px;top:123px;width:7px;height:1.6px;background:#222"></div><div style="position:absolute;left:536.6px;top:114.8px;width:9.2px;height:9.5px;box-sizing:border-box;border:1.2px solid #222;border-top-width:1.8px;"></div><svg style="left:554.5px;top:115.2px" width="9" height="9" viewBox="0 0 9 9"><path d="M0.7 0.7L8.3 8.3M8.3 0.7L0.7 8.3" stroke="#222" stroke-width="1.5"/></svg><div style="position:absolute;left:23.3px;top:129px;width:544.2px;height:21px;background:linear-gradient(#f5f2dd,#f8f5e3)"></div><div style="position:absolute;left:23.3px;top:149.8px;width:544.2px;height:1px;background:#d2ceb8"></div><svg style="left:27px;top:132.5px" width="14" height="14" viewBox="0 0 14 14"><defs><radialGradient id="ghlp" cx="0.4" cy="0.3" r="0.8"><stop offset="0" stop-color="#fff3d0"/><stop offset="0.55" stop-color="#f3c777"/><stop offset="1" stop-color="#d9a04a"/></radialGradient></defs><circle cx="7" cy="7" r="6.5" fill="url(#ghlp)" stroke="#cfa05a" stroke-width="0.6"/><text x="4.1" y="10.8" font-family="Liberation Sans, sans-serif" font-size="10.5" fill="#6a4a22">?</text></svg><div style="position:absolute;left:45.4px;top:133px;width:1px;height:14px;background:#dcd8c2"></div><svg style="left:50.5px;top:132px" width="13.5" height="14" viewBox="0 0 13.5 14"><path d="M4.6 0.5H9.6L11.4 2.3V11.2H4.6Z" fill="#f6f9fc" stroke="#b9c4d2" stroke-width="0.8"/><path d="M6 3.2H10M6 5.2H10M6 7.2H10" stroke="#cdd6e2" stroke-width="0.8"/><path d="M5.3 13.6L9.2 9.9L13.2 13.6Z" fill="#f6d35a" stroke="#e0b840" stroke-width="0.4"/><path d="M2.6 8.4L6 11.8" stroke="#2f9a2f" stroke-width="1.9"/><path d="M0.5 6.2H5.9L0.5 11.6Z" fill="#2f9a2f"/></svg><svg style="left:71.2px;top:132px" width="13.5" height="14" viewBox="0 0 13.5 14"><path d="M2.3 0.5H7.6L9.6 2.3V11.2H2.3Z" fill="#f6f9fc" stroke="#b9c4d2" stroke-width="0.8"/><path d="M3.8 3.2H8M3.8 5.2H8M3.8 7.2H7" stroke="#cdd6e2" stroke-width="0.8"/><path d="M0.3 13.6L4.3 9.9L8.2 13.6Z" fill="#f6d35a" stroke="#e0b840" stroke-width="0.4"/><path d="M12.6 3.2L9.2 8.6" stroke="#2f9a2f" stroke-width="1.8"/><path d="M7.2 6.2L7.4 11.6L12.2 9.4Z" fill="#2f9a2f"/></svg><div style="position:absolute;left:89.2px;top:133px;width:1px;height:14px;background:#dcd8c2"></div><svg style="left:99px;top:134px" width="6" height="11" viewBox="0 0 6 11"><path d="M0 0L6 5.4L0 10.8Z" fill="#1c8a1c"/></svg><span style='position:absolute;white-space:pre;left:110.70px;top:133.63px;font:bold 10.30px/13px "Liberation Sans", sans-serif;color:#3b2b12;letter-spacing:-0.033px;'>Загрузить данные</span><div style="position:absolute;left:30.3px;top:171.3px;width:532px;height:412.3px;box-sizing:border-box;background:#fffef3;border:1px solid #d3cfba;"></div><div style="position:absolute;left:30.5px;top:156.3px;width:93.0px;height:15.2px;box-sizing:border-box;background:linear-gradient(#f2efdc,#ece9d4);border:1px solid #d6d2bc;border-bottom:none;border-radius:4.5px 4.5px 0 0;"></div><span style='position:absolute;white-space:pre;left:39.00px;top:158.13px;font:10.00px/13px "Liberation Sans", sans-serif;color:#38362e;letter-spacing:-0.261px;'>Выгрузка данных</span><div style="position:absolute;left:129px;top:155.5px;width:91.69999999999999px;height:17px;box-sizing:border-box;background:#fffef3;border:1px solid #cfcbb4;border-bottom:none;border-radius:4.5px 4.5px 0 0;border-top:1.6px solid #f0c070;"></div><span style='position:absolute;white-space:pre;left:137.70px;top:158.13px;font:10.00px/13px "Liberation Sans", sans-serif;color:#38362e;letter-spacing:-0.217px;'>Загрузка данных</span><div style="position:absolute;left:227px;top:156.3px;width:139.7px;height:15.2px;box-sizing:border-box;background:linear-gradient(#f2efdc,#ece9d4);border:1px solid #d6d2bc;border-bottom:none;border-radius:4.5px 4.5px 0 0;"></div><span style='position:absolute;white-space:pre;left:234.50px;top:158.13px;font:10.00px/13px "Liberation Sans", sans-serif;color:#38362e;letter-spacing:-0.216px;'>Дополнительные настройки</span><div style="position:absolute;left:373.5px;top:156.3px;width:93.5px;height:15.2px;box-sizing:border-box;background:linear-gradient(#f2efdc,#ece9d4);border:1px solid #d6d2bc;border-bottom:none;border-radius:4.5px 4.5px 0 0;"></div><span style='position:absolute;white-space:pre;left:381.00px;top:158.13px;font:10.00px/13px "Liberation Sans", sans-serif;color:#38362e;letter-spacing:-0.324px;'>Удаление данных</span><span style='position:absolute;white-space:pre;left:39.30px;top:179.34px;font:10.00px/13px "Liberation Sans", sans-serif;color:#38362e;letter-spacing:-0.272px;'>Имя файла для загрузки:</span><div style="position:absolute;left:157px;top:178px;width:398.5px;height:15.699999999999989px;box-sizing:border-box;background:#ffffff;border:1px solid #c3bfa8;border-radius:2.5px;"></div><span style='position:absolute;white-space:pre;left:159.50px;top:179.43px;font:10.30px/13px "Liberation Sans", sans-serif;color:#26251f;letter-spacing:-0.343px;'>C:\Users\Администратор\Desktop\111.xml</span><div style="position:absolute;left:157.8px;top:180.2px;width:1px;height:11.3px;background:#222"></div><div style="position:absolute;left:517px;top:179px;width:37.5px;height:13.7px;background:linear-gradient(#fbf9ee,#efecd8);border-radius:0 2px 2px 0;"></div><div style="position:absolute;left:517px;top:179px;width:1px;height:13.7px;background:#e0dcc8"></div><svg style="left:520.3px;top:184px" width="7" height="4.5" viewBox="0 0 7 4.5"><path d="M0 0H7L3.5 4.2Z" fill="#6b5a20"/></svg><div style="position:absolute;left:530.5px;top:179px;width:1px;height:13.7px;background:#e9e6d6"></div><span style='position:absolute;white-space:pre;left:531.80px;top:179.53px;font:bold 10.00px/13px "Liberation Sans", sans-serif;color:#5a4a1a;letter-spacing:0.119px;'>...</span><div style="position:absolute;left:542.3px;top:179px;width:1px;height:13.7px;background:#e9e6d6"></div><svg style="left:544px;top:180.5px" width="11" height="11" viewBox="0 0 11 11"><circle cx="4.3" cy="4.3" r="3.3" fill="#fdf6da" stroke="#7a6420" stroke-width="1.3"/><path d="M6.8 6.8L10 10" stroke="#7a6420" stroke-width="1.8"/></svg><span style='position:absolute;white-space:pre;left:36.30px;top:200.23px;font:10.00px/13px "Liberation Sans", sans-serif;color:#38362e;letter-spacing:-0.222px;'>Пароль распаковки:</span><div style="position:absolute;left:157px;top:199px;width:120px;height:14.699999999999989px;box-sizing:border-box;background:#ffffff;border:1px solid #c3bfa8;border-radius:2.5px;"></div><div style="position:absolute;left:36px;top:221.20000000000002px;width:11.4px;height:11.4px;box-sizing:border-box;background:#fffffd;border:1px solid #a9a99e;border-radius:2.5px;"></div><span style='position:absolute;white-space:pre;left:49.30px;top:220.53px;font:10.00px/13px "Liberation Sans", sans-serif;color:#38362e;letter-spacing:-0.195px;'>Использовать транзакции</span><span style='position:absolute;white-space:pre;left:56.60px;top:240.23px;font:10.00px/13px "Liberation Sans", sans-serif;color:#b7b39e;letter-spacing:-0.258px;'>Количество элементов в транзакции:</span><div style="position:absolute;left:293px;top:238.9px;width:91.19999999999999px;height:15.699999999999989px;box-sizing:border-box;background:#fffef6;border:1px solid #cfccb8;border-radius:2.5px;"></div><span style='position:absolute;white-space:pre;left:375.00px;top:240.23px;font:10.00px/13px "Liberation Sans", sans-serif;color:#b7b39e;letter-spacing:-0.262px;'>0</span><div style="position:absolute;left:36px;top:260.7px;width:11.4px;height:11.4px;box-sizing:border-box;background:#fffffd;border:1px solid #a9a99e;border-radius:2.5px;"></div><svg style="left:36px;top:260.7px" width="11.4" height="11.4" viewBox="0 0 11.4 11.4"><path d="M2.6 5.4L4.8 8L8.8 3" fill="none" stroke="#1e1e1e" stroke-width="1.7"/></svg><span style='position:absolute;white-space:pre;left:49.30px;top:260.04px;font:10.00px/13px "Liberation Sans", sans-serif;color:#38362e;letter-spacing:-0.231px;'>Загружать данные в режиме обмена (ОбменДанными.Загрузка = Истина)</span><div style="position:absolute;left:36px;top:280.3px;width:11.4px;height:11.4px;box-sizing:border-box;background:#fffffd;border:1px solid #a9a99e;border-radius:2.5px;"></div><svg style="left:36px;top:280.3px" width="11.4" height="11.4" viewBox="0 0 11.4 11.4"><path d="M2.6 5.4L4.8 8L8.8 3" fill="none" stroke="#1e1e1e" stroke-width="1.7"/></svg><span style='position:absolute;white-space:pre;left:49.30px;top:279.64px;font:10.00px/13px "Liberation Sans", sans-serif;color:#38362e;letter-spacing:-0.208px;'>Записывать только измененные объекты</span><div style="position:absolute;left:36px;top:300.7px;width:11.4px;height:11.4px;box-sizing:border-box;background:#fffffd;border:1px solid #a9a99e;border-radius:2.5px;"></div><svg style="left:36px;top:300.7px" width="11.4" height="11.4" viewBox="0 0 11.4 11.4"><path d="M2.6 5.4L4.8 8L8.8 3" fill="none" stroke="#1e1e1e" stroke-width="1.7"/></svg><span style='position:absolute;white-space:pre;left:49.30px;top:300.04px;font:10.00px/13px "Liberation Sans", sans-serif;color:#38362e;letter-spacing:-0.200px;'>Объекты, выгруженные по ссылке, загружать без пометки удаления</span><div style="position:absolute;left:36px;top:319.40000000000003px;width:11.4px;height:11.4px;box-sizing:border-box;background:#fffffd;border:1px solid #a9a99e;border-radius:2.5px;"></div><svg style="left:36px;top:319.40000000000003px" width="11.4" height="11.4" viewBox="0 0 11.4 11.4"><path d="M2.6 5.4L4.8 8L8.8 3" fill="none" stroke="#1e1e1e" stroke-width="1.7"/></svg><span style='position:absolute;white-space:pre;left:49.30px;top:318.74px;font:10.00px/13px "Liberation Sans", sans-serif;color:#38362e;letter-spacing:-0.232px;'>Оптимизированная запись объектов</span><div style="position:absolute;left:36px;top:339.6px;width:11.4px;height:11.4px;box-sizing:border-box;background:#fffffd;border:1px solid #a9a99e;border-radius:2.5px;"></div><svg style="left:36px;top:339.6px" width="11.4" height="11.4" viewBox="0 0 11.4 11.4"><path d="M2.6 5.4L4.8 8L8.8 3" fill="none" stroke="#1e1e1e" stroke-width="1.7"/></svg><span style='position:absolute;white-space:pre;left:49.30px;top:338.94px;font:10.00px/13px "Liberation Sans", sans-serif;color:#38362e;letter-spacing:-0.242px;'>Записывать регистры наборами записей</span><div style="position:absolute;left:36px;top:358.5px;width:11.4px;height:11.4px;box-sizing:border-box;background:#fffffd;border:1px solid #a9a99e;border-radius:2.5px;"></div><span style='position:absolute;white-space:pre;left:49.30px;top:357.84px;font:10.00px/13px "Liberation Sans", sans-serif;color:#38362e;letter-spacing:-0.188px;'>При загрузке строк обрезать незначащие символы справа</span><span style='position:absolute;white-space:pre;left:36.30px;top:379.24px;font:10.00px/13px "Liberation Sans", sans-serif;color:#38362e;letter-spacing:-0.189px;'>Настройки автоматической загрузки данных:</span><div style="position:absolute;left:46.7px;top:396.3px;width:11px;height:11px;box-sizing:border-box;background:#fffffd;border:1px solid #a9a99e;border-radius:50%;"></div><span style='position:absolute;white-space:pre;left:59.50px;top:395.14px;font:10.00px/13px "Liberation Sans", sans-serif;color:#38362e;letter-spacing:-0.191px;'>Не использовать автоматическую загрузку при открытии</span><div style="position:absolute;left:46.7px;top:413.3px;width:11px;height:11px;box-sizing:border-box;background:#fffffd;border:1px solid #a9a99e;border-radius:50%;"></div><div style="position:absolute;left:50.2px;top:416.8px;width:4px;height:4px;background:#222;border-radius:50%;"></div><span style='position:absolute;white-space:pre;left:59.50px;top:412.14px;font:10.00px/13px "Liberation Sans", sans-serif;color:#38362e;letter-spacing:-0.247px;'>Перед автоматической загрузкой задать вопрос о выполнении операции</span><div style="position:absolute;left:46.7px;top:430.5px;width:11px;height:11px;box-sizing:border-box;background:#fffffd;border:1px solid #a9a99e;border-radius:50%;"></div><span style='position:absolute;white-space:pre;left:59.50px;top:429.34px;font:10.00px/13px "Liberation Sans", sans-serif;color:#38362e;letter-spacing:-0.185px;'>Использовать автоматическую загрузку данных</span><span style='position:absolute;white-space:pre;left:36.30px;top:444.93px;font:bold 10.30px/13px "Liberation Sans", sans-serif;color:#a87218;letter-spacing:-0.060px;'>Информация о файле обмена</span><div style="position:absolute;left:36.3px;top:458px;width:520px;height:1px;background:#a5a396"></div><span style='position:absolute;white-space:pre;left:36.30px;top:462.54px;font:10.00px/13px "Liberation Sans", sans-serif;color:#38362e;letter-spacing:-0.348px;'>Версия правил обмена:</span><div style="position:absolute;left:400.3px;top:462px;width:131.2px;height:14.8px;box-sizing:border-box;background:linear-gradient(#fcfbf1,#eae7d2);border:1px solid #bcb89e;border-radius:3px;"></div><span style='position:absolute;white-space:pre;left:408.00px;top:462.84px;font:10.00px/13px "Liberation Sans", sans-serif;color:#38362e;letter-spacing:-0.424px;'>Подробно о файле обмена</span><span style='position:absolute;white-space:pre;left:36.30px;top:482.04px;font:10.00px/13px "Liberation Sans", sans-serif;color:#38362e;letter-spacing:-0.169px;'>Дата выгрузки данных:</span><span style='position:absolute;white-space:pre;left:174.00px;top:482.04px;font:10.00px/13px "Liberation Sans", sans-serif;color:#38362e;letter-spacing:-0.356px;'>01.08.2024 22:58:02</span><span style='position:absolute;white-space:pre;left:36.30px;top:499.74px;font:10.00px/13px "Liberation Sans", sans-serif;color:#38362e;letter-spacing:-0.265px;'>Период выгрузки данных:</span><span style='position:absolute;white-space:pre;left:36.30px;top:517.03px;font:10.00px/13px "Liberation Sans", sans-serif;color:#38362e;letter-spacing:-0.322px;'>Комментарий:</span><div style="position:absolute;left:174px;top:516.3px;width:382px;height:32.30000000000007px;box-sizing:border-box;background:#fffef6;border:1px solid #cdc9b4;border-radius:2.5px;"></div><div style="position:absolute;left:36px;top:561.5px;width:11.4px;height:11.4px;box-sizing:border-box;background:#fffffd;border:1px solid #a9a99e;border-radius:2.5px;"></div><span style='position:absolute;white-space:pre;left:49.30px;top:560.74px;font:10.00px/13px "Liberation Sans", sans-serif;color:#38362e;letter-spacing:-0.191px;'>Режим отладки обработчиков загрузки</span><div style="position:absolute;left:239px;top:558.6px;width:171.8px;height:16.6px;box-sizing:border-box;background:linear-gradient(#fbfaf0,#f2efde);border:1px solid #dcd9c6;border-radius:3px;"></div><span style='position:absolute;white-space:pre;left:256.50px;top:560.63px;font:10.00px/13px "Liberation Sans", sans-serif;color:#c9c5b0;letter-spacing:-0.135px;'>Настройка отладки загрузки...</span><div style="position:absolute;left:0px;top:658px;width:1343px;height:10px;background:#fbfaee"></div><div style="position:absolute;left:0px;top:662px;width:1343px;height:1px;background:#dedac4"></div><div style="position:absolute;left:0px;top:663px;width:1343px;height:5px;background:#f7f5e5"></div><div style="position:absolute;left:0px;top:668px;width:1343px;height:14.5px;background:#b2b2b0"></div><span style='position:absolute;white-space:pre;left:1.20px;top:668.63px;font:bold 10.30px/13px "Liberation Sans", sans-serif;color:#3a2f1c;letter-spacing:-0.135px;'>Служебные сообщения</span><div style="position:absolute;left:0px;top:682.5px;width:1343px;height:92px;background:#ffffff"></div><div style="position:absolute;left:0px;top:682.5px;width:12.7px;height:92px;background:#f0eee1"></div><span style='position:absolute;white-space:pre;left:14.60px;top:696.44px;font:11.47px/15px "Liberation Mono", monospace;color:#33332f;letter-spacing:0.002px;'>Начало загрузки:   02.08.2024 10:27:20</span><span style='position:absolute;white-space:pre;left:14.60px;top:710.84px;font:11.47px/15px "Liberation Mono", monospace;color:#33332f;letter-spacing:0.003px;'>Не найдено предопределенное свойство документов "Идентификатор", данные не могут быть загружены</span><span style='position:absolute;white-space:pre;left:1.60px;top:711.07px;font:bold 11.00px/14px "Liberation Mono", monospace;color:#e0382c;letter-spacing:-0.009px;'>!</span><svg style="left:1324.8px;top:670.8px" width="6" height="8" viewBox="0 0 6 8"><rect x="1.5" y="0.5" width="3" height="4" fill="none" stroke="#f4f4f4" stroke-width="0.9"/><path d="M0.5 4.8H5.5M3 5V7.5" stroke="#f4f4f4" stroke-width="0.9"/></svg><svg style="left:1338px;top:670px" width="10" height="10" viewBox="0 0 10 10"><path d="M0.5 0.5L9.5 9.5M9.5 0.5L0.5 9.5" stroke="#3a2f1c" stroke-width="1.7"/></svg><span style='position:absolute;white-space:pre;left:966.70px;top:729.38px;font:16.80px/22px "Liberation Sans", sans-serif;color:#c2c2c2;letter-spacing:0.138px;'>Активация Windows</span><span style='position:absolute;white-space:pre;left:966.70px;top:751.50px;font:12.40px/16px "Liberation Sans", sans-serif;color:#cbcbcb;letter-spacing:0.324px;'>Чтобы активировать Windows, перейдите в компонент</span><span style='position:absolute;white-space:pre;left:1088.00px;top:769.30px;font:12.40px/16px "Liberation Sans", sans-serif;color:#cbcbcb;letter-spacing:-0.014px;'>"Система".</span>
</div></body></html>
